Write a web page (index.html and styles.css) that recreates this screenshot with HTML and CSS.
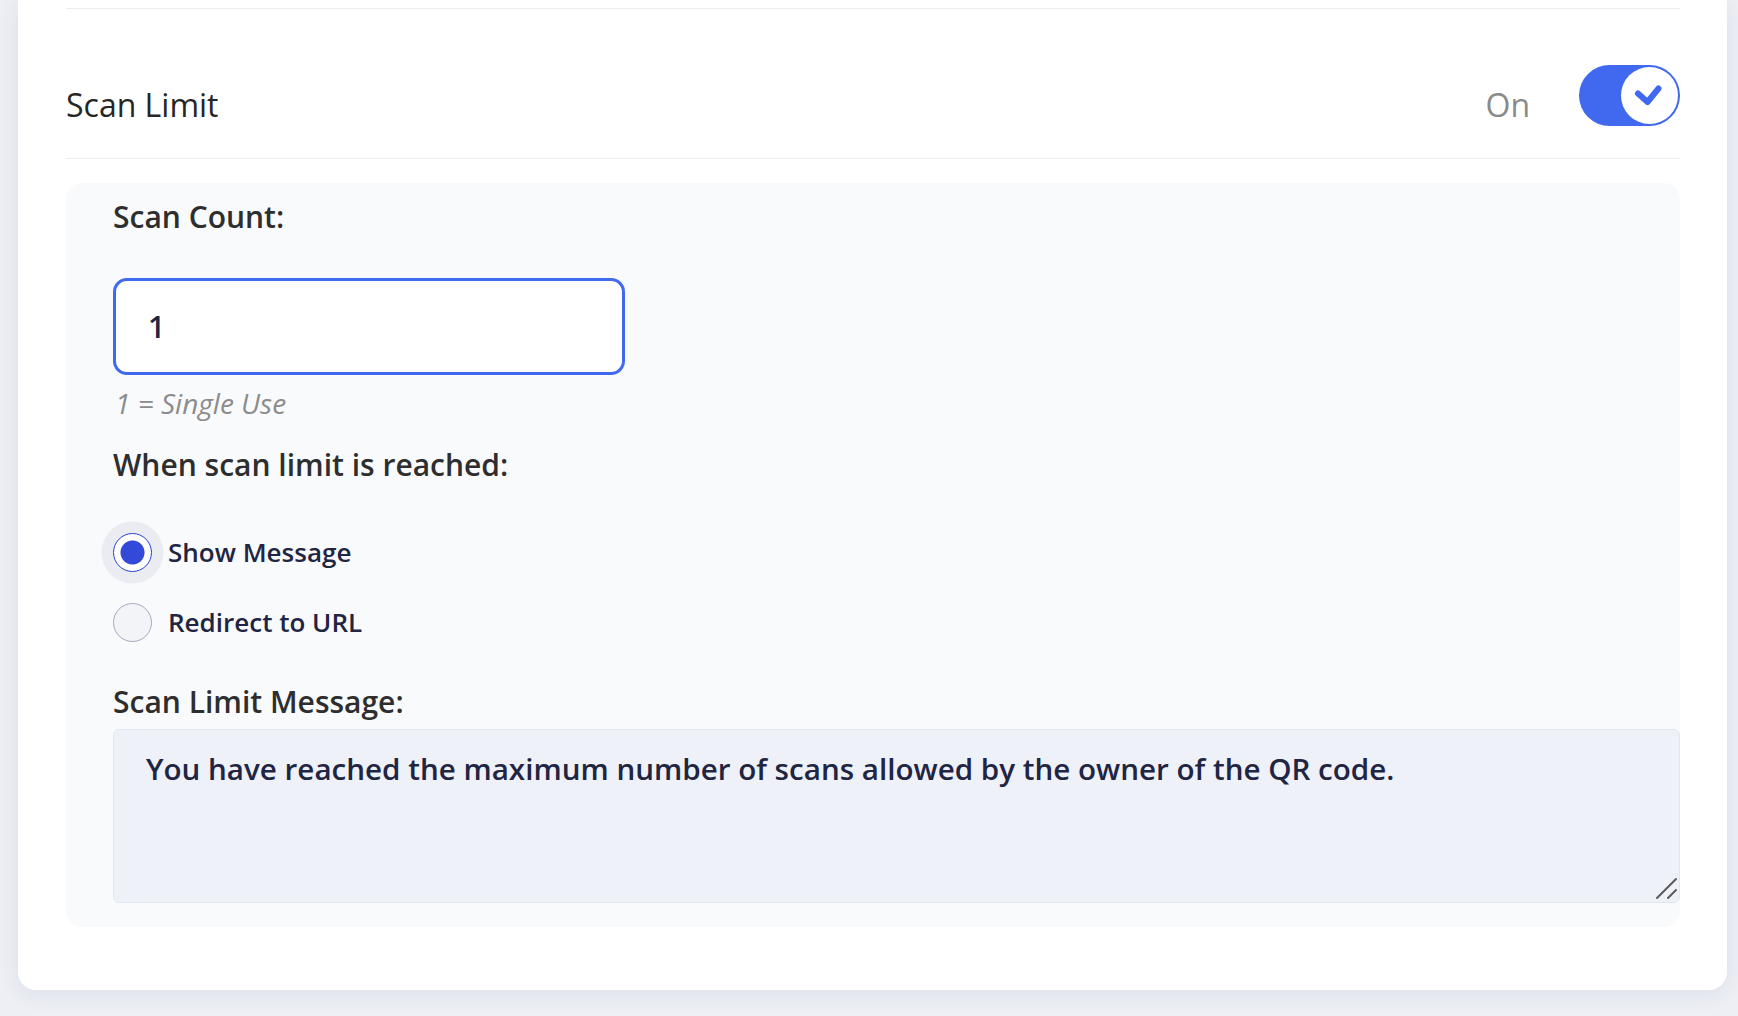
FILE: index.html
```html
<!DOCTYPE html>
<html lang="en">
<head>
<meta charset="utf-8">
<title>Scan Limit</title>
<link rel="stylesheet" href="styles.css">
</head>
<body>
<div class="card">
  <div class="topline"></div>
  <div class="hdr">
    <div class="title">Scan Limit</div>
    <div class="right">
      <span class="on">On</span>
      <div class="toggle">
        <div class="knob">
          <svg width="57" height="57" viewBox="0 0 57 57"><path d="M17 26.5 L26.5 35 L37.5 21.5" fill="none" stroke="#4169f0" stroke-width="6" stroke-linecap="round" stroke-linejoin="round"/></svg>
        </div>
      </div>
    </div>
  </div>
  <div class="panel">
    <div class="label">Scan Count:</div>
    <input class="count" type="text" value="1">
    <div class="help">1 = Single Use</div>
    <div class="label when">When scan limit is reached:</div>
    <div class="radios">
      <label class="radio"><input type="radio" name="act" checked><span>Show Message</span></label>
      <label class="radio"><input type="radio" name="act"><span>Redirect to URL</span></label>
    </div>
    <div class="label msg">Scan Limit Message:</div>
    <div class="msgwrap">
      <textarea class="message">You have reached the maximum number of scans allowed by the owner of the QR code.</textarea>
      <svg class="grip" width="24" height="24" viewBox="0 0 24 24"><path d="M3 22 L22 3 M14 22 L22 14" fill="none" stroke="#5a5a5a" stroke-width="2" stroke-linecap="round"/></svg>
    </div>
  </div>
</div>
</body>
</html>
```
FILE: styles.css
```css
html, body {
  margin: 0;
  padding: 0;
}
body {
  background: #edeff5;
  font-family: "Open Sans", "Noto Sans", sans-serif;
  height: 1016px;
  overflow: hidden;
}
.card {
  margin-left: 18px;
  width: 1709px;
  box-sizing: border-box;
  padding: 8px 47px 63px 48px;
  background: #ffffff;
  border-radius: 0 0 18px 18px;
  box-shadow: 0 4px 22px rgba(40, 50, 90, 0.08);
}
.topline {
  height: 1px;
  background: #ececec;
}
.hdr {
  display: flex;
  align-items: flex-start;
  height: 150px;
  box-sizing: border-box;
  border-bottom: 1px solid #ececec;
}
.title {
  margin-top: 74px;
  font-size: 32px;
  line-height: 44px;
  color: #262626;
}
.right {
  margin-left: auto;
  display: flex;
  align-items: flex-start;
}
.on {
  margin-top: 74px;
  font-size: 32px;
  line-height: 44px;
  color: #8a8a8a;
}
.toggle {
  margin-top: 56px;
  margin-left: 49px;
  width: 101px;
  height: 61px;
  box-sizing: border-box;
  padding: 2px;
  border-radius: 31px;
  background: #4169f0;
  display: flex;
  justify-content: flex-end;
}
.knob {
  width: 57px;
  height: 57px;
  border-radius: 50%;
  background: #ffffff;
}
.knob svg {
  display: block;
}
.panel {
  margin-top: 24px;
  background: #f9fafc;
  border-radius: 16px;
  padding: 14px 0 24px 47px;
  display: flex;
  flex-direction: column;
  align-items: flex-start;
}
.label {
  font-size: 30px;
  line-height: 40px;
  font-weight: 600;
  color: #2e2e2e;
}
.count {
  margin-top: 41px;
  width: 512px;
  height: 97px;
  box-sizing: border-box;
  border: 3px solid #4169f0;
  border-radius: 14px;
  background: #ffffff;
  padding: 0 0 0 32px;
  font-family: "Open Sans", "Noto Sans", sans-serif;
  font-size: 30px;
  font-weight: 600;
  color: #1f2542;
  outline: none;
}
.help {
  margin-top: 10px;
  padding-left: 2px;
  font-size: 28px;
  line-height: 36px;
  font-style: italic;
  color: #8c8c8c;
}
.when {
  margin-top: 24px;
}
.radios {
  margin-top: 35px;
  display: flex;
  flex-direction: column;
  gap: 6px;
}
.radio {
  display: flex;
  align-items: center;
  height: 64px;
  gap: 16px;
  font-size: 26px;
  font-weight: 600;
  color: #1f2542;
}
.radio input {
  appearance: none;
  -webkit-appearance: none;
  margin: 0;
  width: 39px;
  height: 39px;
  box-sizing: border-box;
  border-radius: 50%;
  border: 1.5px solid #a3abc2;
  background: #f3f4f8;
}
.radio input:checked {
  border-color: #2b3fd1;
  background: radial-gradient(circle, #3349d8 0 11.5px, #ffffff 12.5px);
  box-shadow: 0 0 0 11.5px #eaecf1;
}
.msg {
  margin-top: 28px;
}
.msgwrap {
  margin-top: 7px;
  align-self: stretch;
  position: relative;
  display: flex;
}
.message {
  flex: 1;
  height: 174px;
  box-sizing: border-box;
  border: 1px solid #e2e6ee;
  border-radius: 6px;
  background: #eef1f8;
  padding: 16px 32px 14px;
  font-family: "Open Sans", "Noto Sans", sans-serif;
  font-size: 29.6px;
  line-height: 45px;
  font-weight: 600;
  color: #1f2542;
  resize: none;
  outline: none;
}
.grip {
  position: absolute;
  right: 2px;
  bottom: 3px;
  pointer-events: none;
}
```
